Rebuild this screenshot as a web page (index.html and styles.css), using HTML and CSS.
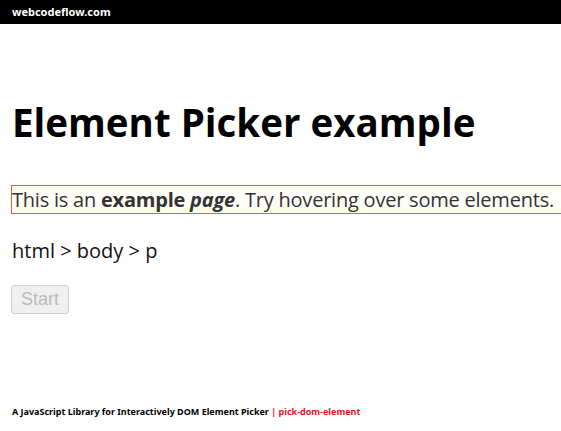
FILE: index.html
```html
<!DOCTYPE html>
<html lang="en">
<head>
    <meta charset="UTF-8">
    <meta name="viewport" content="width=device-width, initial-scale=1.0">
    <title>Element Picker example</title>
    <link rel="stylesheet" href="styles.css">
</head>
<body>
    <div class="topbar">webcodeflow.com</div>
    <div class="content">
        <h1>Element Picker example</h1>
        <p class="sample picked">This is an <b>example <i>page</i></b>. Try hovering over some elements.</p>
        <div class="path">html &gt; body &gt; p</div>
        <button class="start" disabled>Start</button>
    </div>
    <div class="footer">A JavaScript Library for Interactively DOM Element Picker <span class="link">| pick-dom-element</span></div>
</body>
</html>
```

FILE: styles.css
```css
html {
    overflow: hidden;
}
body {
    margin: 0;
    background: white;
    font-family: "Open Sans", sans-serif;
    height: 431px;
    position: relative;
}
.topbar {
    background: black;
    color: white;
    height: 24px;
    line-height: 24px;
    padding-left: 12px;
    font-family: "Noto Sans", sans-serif;
    font-weight: bold;
    font-size: 11px;
}
.content {
    padding: 0 12px;
}
h1 {
    font-size: 38.5px;
    font-weight: bold;
    margin: 72px 0 0 0;
    color: black;
}
.sample {
    font-size: 20px;
    letter-spacing: -0.22px;
    color: #333;
    margin: 37px -40px 0 -1px;
    line-height: 27px;
}
.picked {
    border: 1px solid #ec5a45;
    background: #fffdf7;
}
.path {
    font-size: 20px;
    color: #111;
    margin-top: 23px;
}
.start {
    margin-top: 21px;
    margin-left: -1px;
    font-family: "Liberation Sans", Arial, sans-serif;
    font-size: 18px;
    padding: 2px 9px;
    height: 29px;
    color: #bbb;
    background: #efefef;
    border: 1px solid #cfcfcf;
    border-radius: 3px;
}
.footer {
    position: absolute;
    left: 12px;
    top: 405px;
    font-family: "Noto Sans", sans-serif;
    font-weight: bold;
    font-size: 9px;
    color: black;
}
.footer .link {
    color: #e8141b;
}
```
